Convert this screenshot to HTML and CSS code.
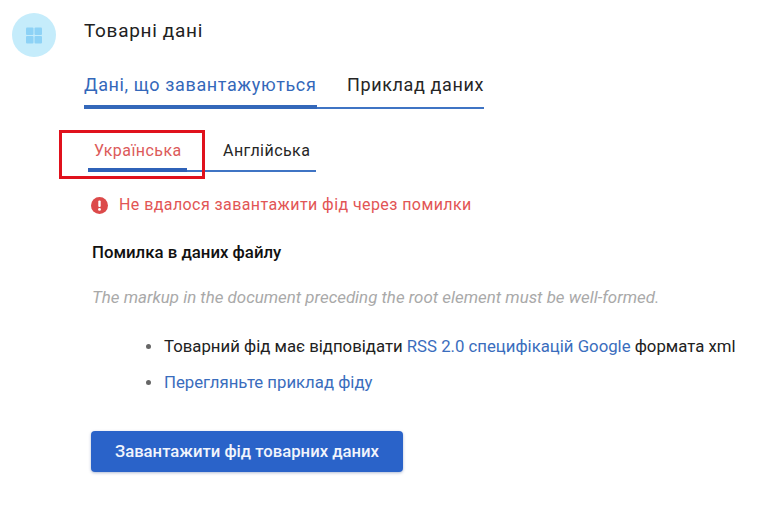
FILE: index.html
```html
<!DOCTYPE html>
<html lang="uk">
<head>
<meta charset="utf-8">
<title>Товарні дані</title>
<link rel="stylesheet" href="styles.css">
</head>
<body>
<div class="page">
  <div class="avatar">
    <svg class="grid-icon" width="18" height="18" viewBox="0 0 18 18" aria-hidden="true">
      <rect x="1" y="1.5" width="7.5" height="7.5" rx="1"/>
      <rect x="9.5" y="1.5" width="7.5" height="7.5" rx="1"/>
      <rect x="1" y="10" width="7.5" height="7.5" rx="1"/>
      <rect x="9.5" y="10" width="7.5" height="7.5" rx="1"/>
    </svg>
  </div>
  <main class="content">
    <h1 class="title">Товарні дані</h1>
    <div class="tabs">
      <div class="tab tab-active">Дані, що завантажуються</div>
      <div class="tab tab-second">Приклад даних</div>
    </div>
    <div class="subtabs">
      <div class="subtab subtab-active">Українська</div>
      <div class="subtab subtab-second">Англійська</div>
      <div class="highlight"></div>
    </div>
    <div class="error">
      <svg class="error-icon" width="17" height="17" viewBox="0 0 17 17" aria-hidden="true">
        <circle cx="8.5" cy="8.5" r="8.5"/>
        <rect x="7.3" y="3.5" width="2.4" height="6.5" rx="1" class="mark"/>
        <circle cx="8.5" cy="12.4" r="1.4" class="mark"/>
      </svg>
      <span>Не вдалося завантажити фід через помилки</span>
    </div>
    <h2 class="err-title">Помилка в даних файлу</h2>
    <p class="err-detail">The markup in the document preceding the root element must be well-formed.</p>
    <ul class="hints">
      <li>Товарний фід має відповідати <a href="#">RSS 2.0 специфікацій Google</a> формата xml</li>
      <li><a href="#">Перегляньте приклад фіду</a></li>
    </ul>
    <button class="upload" type="button">Завантажити фід товарних даних</button>
  </main>
</div>
</body>
</html>
```

FILE: styles.css
```css
html, body {
  margin: 0;
  padding: 0;
  background: #fff;
}
body {
  width: 765px;
  height: 511px;
  overflow: hidden;
  font-family: Roboto, "Liberation Sans", sans-serif;
  color: #212121;
}
.page {
  display: flex;
  padding: 13px 0 0 12px;
}
.avatar {
  width: 44px;
  height: 44px;
  flex: none;
  border-radius: 50%;
  background: #c5ecfb;
  display: flex;
  align-items: center;
  justify-content: center;
  margin-right: 28px;
}
.grid-icon rect { fill: #8dd2f6; }
.content {
  flex: 1;
  min-width: 0;
}
.title {
  margin: 5px 0 0;
  font-size: 19px;
  line-height: 26px;
  font-weight: 400;
  letter-spacing: 0.68px;
}
.tabs {
  display: flex;
  width: 400px;
  margin-top: 28px;
  border-bottom: 2px solid #3f74c4;
}
.tab {
  font-size: 18px;
  line-height: 26px;
  letter-spacing: 0.62px;
  padding-bottom: 9px;
}
.tab-active {
  color: #3468ba;
  width: 233px;
  box-shadow: inset 0 -2px 0 #3468ba, 0 2px 0 #3468ba;
}
.tab-second {
  margin-left: 30px;
  color: #262626;
}
.subtabs {
  position: relative;
  display: flex;
  width: 228px;
  margin: 31px 0 0 4px;
  border-bottom: 2px solid #3f74c4;
}
.subtab {
  font-size: 16px;
  line-height: 22px;
  letter-spacing: 0.45px;
  padding-bottom: 8px;
}
.subtab-active {
  color: #dc5a5a;
  width: 99px;
  padding-left: 6px;
  box-sizing: border-box;
  box-shadow: inset 0 -2px 0 #2f62b8, 0 2px 0 #2f62b8;
}
.subtab-second {
  margin-left: 36px;
  color: #262626;
}
.highlight {
  position: absolute;
  left: -29px;
  top: -10px;
  width: 146px;
  height: 49px;
  border: 3px solid #e0111c;
  box-sizing: border-box;
}
.error {
  display: flex;
  align-items: center;
  gap: 11px;
  margin: 22px 0 0 7px;
  font-size: 16px;
  line-height: 22px;
  letter-spacing: 0.42px;
  color: #e25555;
}
.error-icon { flex: none; }
.error-icon circle { fill: #dc4a4a; }
.error-icon .mark { fill: #fff; }
.err-title {
  margin: 25px 0 0 8px;
  font-size: 16.8px;
  line-height: 22px;
  font-weight: 500;
  color: #111;
}
.err-detail {
  margin: 23px 0 0 8px;
  font-size: 16.9px;
  line-height: 22px;
  font-style: italic;
  color: #a9a9a9;
}
.hints {
  margin: 27px 0 0;
  padding: 0 0 0 80px;
  list-style: none;
  font-size: 16.75px;
  line-height: 22px;
}
.hints li {
  position: relative;
  margin-bottom: 14px;
  white-space: nowrap;
}
.hints li::before {
  content: "";
  position: absolute;
  left: -18px;
  top: 9px;
  width: 5px;
  height: 5px;
  border-radius: 50%;
  background: #666;
}
.hints a {
  color: #3a6dbd;
  text-decoration: none;
}
.upload {
  display: block;
  width: 312px;
  height: 41px;
  margin: 38px 0 0 7px;
  border: 0;
  border-radius: 4px;
  background: #2a63c9;
  box-shadow: 0 1px 3px rgba(30, 60, 130, 0.35);
  color: #f2f5fc;
  font-family: inherit;
  font-size: 16.7px;
  font-weight: 500;
}
```
